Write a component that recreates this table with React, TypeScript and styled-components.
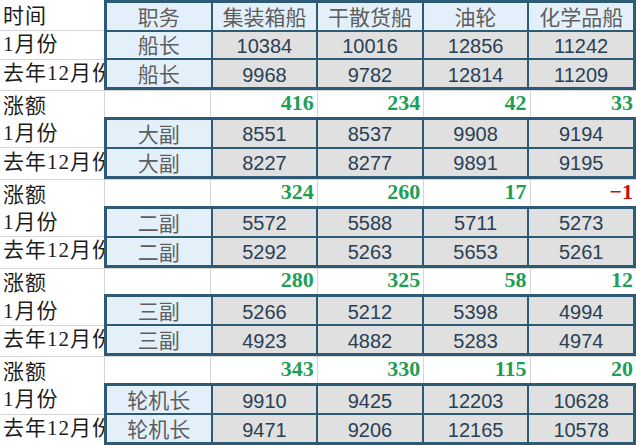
import styled, { createGlobalStyle } from "styled-components";

const GlobalStyle = createGlobalStyle`
  html, body {
    margin: 0;
    padding: 0;
    background: #ffffff;
  }
  body {
    width: 636px;
    height: 445px;
    overflow: hidden;
  }
`;

const BORDER = "#2d5a74";

const ships = ["集装箱船", "干散货船", "油轮", "化学品船"];

const groups = [
  {
    role: "船长",
    jan: [10384, 10016, 12856, 11242],
    dec: [9968, 9782, 12814, 11209],
    delta: [416, 234, 42, 33],
  },
  {
    role: "大副",
    jan: [8551, 8537, 9908, 9194],
    dec: [8227, 8277, 9891, 9195],
    delta: [324, 260, 17, -1],
  },
  {
    role: "二副",
    jan: [5572, 5588, 5711, 5273],
    dec: [5292, 5263, 5653, 5261],
    delta: [280, 325, 58, 12],
  },
  {
    role: "三副",
    jan: [5266, 5212, 5398, 4994],
    dec: [4923, 4882, 5283, 4974],
    delta: [343, 330, 115, 20],
  },
  {
    role: "轮机长",
    jan: [9910, 9425, 12203, 10628],
    dec: [9471, 9206, 12165, 10578],
    delta: null,
  },
];

const App = () => {
  return (
    <>
      <GlobalStyle />
      <Sheet>
        {groups.map((g, i) => (
          <Group key={g.role}>
            <Section $h={i === 0 ? 90 : 62}>
              <LabelColumn>
                {i === 0 && <Label>时间</Label>}
                <Label>1月份</Label>
                <Label>去年12月份</Label>
              </LabelColumn>
              <Block>
                {i === 0 && (
                  <>
                    <TagCell>职务</TagCell>
                    {ships.map((s) => (
                      <TagCell key={s}>{s}</TagCell>
                    ))}
                  </>
                )}
                <TagCell>{g.role}</TagCell>
                {g.jan.map((v, k) => (
                  <ValueCell key={"j" + k}>{v}</ValueCell>
                ))}
                <TagCell>{g.role}</TagCell>
                {g.dec.map((v, k) => (
                  <ValueCell key={"d" + k}>{v}</ValueCell>
                ))}
              </Block>
            </Section>
            {g.delta && (
              <DeltaRow>
                <DeltaLabel>涨额</DeltaLabel>
                <DeltaCell />
                {g.delta.map((v, k) => (
                  <DeltaCell key={k} $down={v < 0}>
                    {v < 0 ? "−" + Math.abs(v) : v}
                  </DeltaCell>
                ))}
              </DeltaRow>
            )}
          </Group>
        ))}
      </Sheet>
    </>
  );
};

export default App;

const Sheet = styled.div`
  width: 636px;
  height: 445px;
  display: flex;
  flex-direction: column;
  background: #fff;
  overflow: hidden;
`;

const Group = styled.div`
  display: contents;
`;

const Section = styled.div<{ $h: number }>`
  height: ${(p) => p.$h}px;
  flex: none;
  display: grid;
  grid-template-columns: 104px 1fr;
  grid-template-rows: minmax(0, 1fr);
`;

const LabelColumn = styled.div`
  display: flex;
  flex-direction: column;
  padding: 3px 0;
  min-height: 0;
  overflow: hidden;
`;

const Label = styled.div`
  flex: 1;
  min-height: 0;
  display: flex;
  align-items: center;
  padding-left: 3px;
  white-space: nowrap;
  line-height: 1;
  letter-spacing: 1px;
  font-family: "Liberation Serif", "Noto Sans CJK SC", serif;
  font-size: 21px;
  color: #1c1c1c;

  & + & {
    border-top: 1px solid #d6d6d6;
  }
`;

const Block = styled.div`
  display: grid;
  grid-template-columns: repeat(5, 1fr);
  grid-auto-rows: minmax(0, 1fr);
  gap: 2px;
  min-height: 0;
  border: 3px solid ${BORDER};
  background: ${BORDER};
`;

const TagCell = styled.div`
  display: flex;
  align-items: center;
  justify-content: center;
  background: #e3f0fa;
  color: #5e5e5e;
  line-height: 1;
  font-family: "Noto Sans CJK SC", sans-serif;
  font-size: 21px;
  overflow: hidden;
  white-space: nowrap;
`;

const ValueCell = styled.div`
  display: flex;
  align-items: center;
  justify-content: center;
  padding-top: 2px;
  background: #e0e0e0;
  color: #2a3f55;
  line-height: 1;
  font-family: "Liberation Sans", Arial, sans-serif;
  font-size: 20px;
`;

const DeltaRow = styled.div`
  flex: 1;
  min-height: 0;
  display: grid;
  grid-template-columns: 104px repeat(5, 1fr);
  grid-template-rows: minmax(0, 1fr);
  border-top: 1px solid #d6d6d6;
`;

const DeltaLabel = styled.div`
  display: flex;
  align-items: flex-end;
  padding: 0 0 2px 3px;
  line-height: 1;
  letter-spacing: 1px;
  font-family: "Noto Sans CJK SC", sans-serif;
  font-size: 21px;
  color: #1c1c1c;
`;

const DeltaCell = styled.div<{ $down?: boolean }>`
  display: flex;
  align-items: flex-end;
  justify-content: flex-end;
  padding: 0 3px 3px 0;
  line-height: 1;
  border-left: 1px solid #d6d6d6;
  font-family: "Liberation Serif", serif;
  font-weight: bold;
  font-size: 22px;
  color: ${(p) => (p.$down ? "#cc1010" : "#1f9e55")};
`;
